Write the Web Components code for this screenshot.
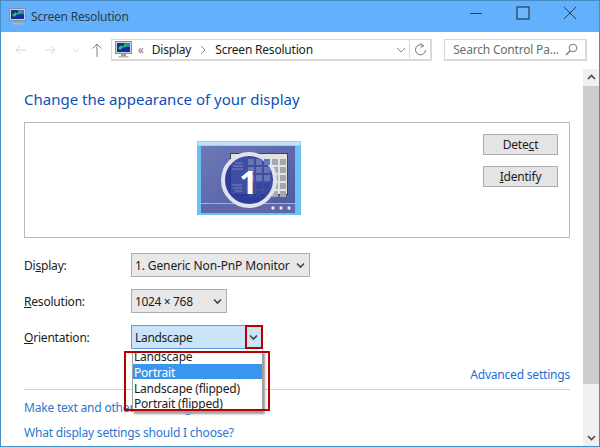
<!DOCTYPE html>
<html><head><meta charset="utf-8"><title>Screen Resolution</title>
<style>
html,body{margin:0;padding:0;height:100%;overflow:hidden;background:#fff}
body{font:12px "Noto Sans","Open Sans",sans-serif;color:#1c1c1c;letter-spacing:-.2px}
</style></head><body>
<app-window>
  <title-bar label="Screen Resolution"></title-bar>
  <nav-bar></nav-bar>
  <page-body>
    <display-panel></display-panel>
    <scroll-track slot="scroll"></scroll-track>
  </page-body>
</app-window>
<script>
const MON=`<svg width="17" height="17" viewBox="0 0 17 17"><rect x="0.5" y="0.5" width="16" height="12" fill="#cfd2d4" stroke="#8b8f92"/><rect x="2" y="2" width="13" height="9" fill="#0f2fa8"/><path d="M9 2h6v4H9z" fill="#2a7fd8"/><path d="M3 7l4-3 0 1.500 6-3-4 4.500 0-1.500-4 3.500z" fill="#2fd02f"/><rect x="6" y="13" width="5" height="2" fill="#9da0a3"/><rect x="3.500" y="15" width="10" height="1.500" fill="#b6b9bb"/></svg>`;
function def(name,html,extra){
  customElements.define(name,class extends HTMLElement{
    constructor(){super();this.attachShadow({mode:'open'}).innerHTML=html;}
    connectedCallback(){if(extra)extra(this);}
  });
}
def('app-window',`<style>:host{display:flex;flex-direction:column;box-sizing:border-box;width:600px;height:447px;border:1px solid #4a8cc4;background:#fff;overflow:hidden}</style><slot></slot>`);
def('title-bar',`<style>:host{display:flex;align-items:center;flex:none;height:31px;background:#63b0fc;padding-left:8px;font-size:12px;color:#2e3a4a}
.t{margin-left:5px;flex:1}
.b{display:flex;align-items:center;justify-content:center;width:47px;height:24px;margin-top:-8px}
svg{display:block}</style>
${MON}<span class="t" id="t"></span>
<span class="b"><svg width="14" height="14"><path d="M1 7.500h12" stroke="#2c3d50" stroke-width="1"/></svg></span>
<span class="b"><svg width="14" height="14"><rect x="1" y="1" width="12" height="12" fill="#6cb8ff" stroke="#2c3d50" stroke-width="1.200"/></svg></span>
<span class="b" style="margin-right:6px"><svg width="14" height="14"><path d="M1 1l12 12M13 1L1 13" stroke="#2c3d50" stroke-width="1"/></svg></span>`,
el=>{el.shadowRoot.getElementById('t').textContent=el.getAttribute('label')});
def('nav-bar',`<style>:host{display:flex;align-items:center;flex:none;height:22px;padding:7px 12px 8px 13px;background:#fff}
svg{display:block;flex:none}
.nav{display:flex;align-items:center;width:97px;gap:0}
.addr{display:flex;align-items:center;box-sizing:border-box;width:322px;height:22px;border:1px solid #d9d9d9;border-width:1px 2px 2px 1px;color:#1c1c1c;padding-left:3px}
.c{color:#777;margin:0 8px 0 6px;font-size:12px}
.s{margin:0 8px 0 9px}
.grow{flex:1}
.rf{display:flex;align-items:center;justify-content:center;width:20px;height:100%;border-left:1px solid #d9d9d9}
.srch{display:flex;align-items:center;box-sizing:border-box;width:143px;height:22px;margin-left:12px;border:1px solid #d9d9d9;border-width:1px 2px 2px 1px;padding:0 7px 0 8px;color:#6d6d6d}
</style>
<div class="nav">
<svg width="14" height="14" style="margin-right:15px"><path d="M12 7H2M6 3L2 7l4 4" fill="none" stroke="#d8d8d8"/></svg>
<svg width="14" height="14" style="margin-right:14px"><path d="M2 7h10M8 3l4 4-4 4" fill="none" stroke="#d8d8d8"/></svg>
<svg width="10" height="14" style="margin-right:10px"><path d="M2 6l3 3 3-3" fill="none" stroke="#dcdcdc"/></svg>
<svg width="12" height="16"><path d="M6 15V2M1.500 6.500L6 2l4.500 4.500" fill="none" stroke="#7d8287"/></svg>
</div>
<div class="addr">${MON}<span class="c">&laquo;</span><span>Display</span>
<svg class="s" width="7" height="10"><path d="M1 1l4 4-4 4" fill="none" stroke="#8a8a8a"/></svg>
<span>Screen Resolution</span><span class="grow"></span>
<svg width="10" height="8" style="margin-right:3px"><path d="M1 2l4 4 4-4" fill="none" stroke="#8a8a8a"/></svg>
<span class="rf"><svg width="13" height="13" viewBox="0 0 13 13"><path d="M9.500 2.800A5 5 0 1 0 11.500 7" fill="none" stroke="#777"/><path d="M6.500 .5l3 2.300-3 2" fill="none" stroke="#777"/></svg></span></div>
<div class="srch"><span>Search Control Pa...</span><span class="grow"></span>
<svg width="13" height="13" viewBox="0 0 13 13"><circle cx="8" cy="5" r="3.800" fill="none" stroke="#777"/><path d="M5.200 7.800L1 12" stroke="#777" stroke-width="1.300"/></svg></div>`);
def('page-body',`<style>:host{display:flex;flex:1;min-height:0}
.m{flex:1;min-width:0}</style><div class="m"><slot></slot></div><slot name="scroll"></slot>`);
def('scroll-track',`<style>:host{display:flex;flex-direction:column;flex:none;width:16px;background:#f0f0f0}
.a{display:flex;align-items:center;justify-content:center;height:17px;flex:none}
.th{height:298px;background:#cdcdcd;flex:none}.g{flex:1}</style>
<div class="a"><svg width="9" height="7"><path d="M1 5l3.500-3.500L8 5" fill="none" stroke="#505050" stroke-width="1.700"/></svg></div>
<div class="th"></div><div class="g"></div>
<div class="a"><svg width="9" height="7"><path d="M1 2l3.500 3.500L8 2" fill="none" stroke="#505050" stroke-width="1.700"/></svg></div>`);
def('cmd-button',`<style>:host{display:flex;align-items:center;justify-content:center;box-sizing:border-box;width:75px;height:21px;border:1px solid #adadad;background:#e4e4e4;color:#1c1c1c;font-size:12px}</style><slot></slot>`);
def('combo-box',`<style>:host{display:inline-flex;align-items:center;box-sizing:border-box;height:24px;border:1px solid #adadad;background:#e8e8e8;padding-left:3px;color:#1c1c1c;position:relative;letter-spacing:-.12px}
:host([open]){border-color:#569de5;background:#cce4f7}
.txt{flex:1;white-space:nowrap}
.ar{display:flex;align-items:center;justify-content:center;width:17px;flex:none}
</style><span class="txt"><slot></slot></span><span class="ar"><svg width="9" height="7"><path d="M1 1.500L4.500 5 8 1.500" fill="none" stroke="#444" stroke-width="1.600"/></svg></span><slot name="over"></slot>`);
def('form-row',`<style>:host{display:flex;align-items:center;height:24px}
.l{width:107px;flex:none;color:#1c1c1c}</style><span class="l"><slot name="label"></slot></span><slot></slot>`);
def('drop-list',`<style>:host{position:absolute;z-index:2;display:block;box-sizing:border-box;width:131px;height:61px;left:0;top:25px;background:#fff;border:1px solid #a0a0a0;border-top:none;box-shadow:2px 2px 2px #9a9a9a;color:#1c1c1c;letter-spacing:-.2px}
::slotted(div){height:15px;line-height:17px;white-space:nowrap;padding-left:1px}
::slotted(.first){height:13px;line-height:11px}
::slotted(.sel){background:#3a95ee;color:#fff;margin-bottom:1px}</style><slot></slot>`);
def('red-mark',`<style>:host{position:absolute;z-index:3;display:block;box-sizing:border-box;border:2px solid #b80000;pointer-events:none}</style>`);
def('monitor-art',`<style>:host{display:block;width:104px;height:74px;position:relative}
svg{display:block}
.n{position:absolute;left:0;width:103px;top:23px;text-align:center;color:#fff;font:700 32px/36px "Noto Sans",sans-serif;letter-spacing:0}
</style>
<svg width="104" height="74" viewBox="0 0 104 74">
<defs><linearGradient id="g" x1="0" y1="0" x2="1" y2="1"><stop offset="0" stop-color="#6e79b7"/><stop offset="1" stop-color="#4d5a9e"/></linearGradient></defs>
<rect x="0" y="0" width="104" height="74" fill="#6cc0f2"/>
<rect x="0.500" y="0.500" width="103" height="4" fill="#bfe3f8"/>
<rect x="4" y="5" width="94" height="67" fill="url(#g)"/>
<rect x="4" y="63" width="94" height="9" fill="#5c68a8"/><path d="M4 62.500h94" stroke="#aab0d4"/>
<rect x="33.500" y="12.500" width="57" height="41" fill="#e4e2dc" stroke="#3b3f5a"/>
<g fill="#a4a7b4">${[0,1,2,3,4].map(r=>[0,1,2,3,4].map(c=>`<rect x="${51+c*8}" y="${18+r*8}" width="6" height="6"/>`).join('')).join('')}</g>
<circle cx="52" cy="39" r="26" fill="#28389a" fill-opacity=".88" stroke="#dfe3f0" stroke-width="4"/>
<g fill="#6a75b8">${[0,1,2].map(r=>[0,1,2].map(c=>`<rect x="${51+c*8}" y="${18+r*8}" width="6" height="6"/>`).join('')).join('')}</g>
<g stroke="#7a85c0"><path d="M38 22h8M36 25h10M35 28h11M35 44h10M36 47h9M38 50h7"/></g>
<circle cx="76" cy="67" r="1.700" fill="#e6e8f4"/><circle cx="84" cy="67" r="1.700" fill="#e6e8f4"/><circle cx="92" cy="67" r="1.700" fill="#e6e8f4"/>
</svg><div class="n">1</div>`);
def('display-panel',`<style>:host{display:block;box-sizing:border-box;padding:0 13px 0 23px;position:relative;height:100%}
h1{margin:0;font-weight:400;font-size:15px;line-height:20px;color:#0c50b8;height:20px;margin-top:20px;letter-spacing:0}
.box{display:flex;box-sizing:border-box;height:116px;margin-top:13px;border:1px solid #b9b9b9;background:#fff}
.c{flex:1;display:flex;justify-content:center;padding-top:18px;padding-right:10px}
.bs{display:flex;flex-direction:column;gap:11px;padding:11px 11px 0 0}
.rows{display:flex;flex-direction:column;gap:12px;margin-top:15px}
.adv{display:flex;justify-content:flex-end;margin-top:17px;height:18px;line-height:18px;color:#1a6fd6}
hr{border:0;border-top:1px solid #d0d0d0;margin:5px 0 0}
.lk{display:block;color:#2a76d2;height:18px;line-height:18px;white-space:nowrap}
</style>
<h1>Change the appearance of your display</h1>
<div class="box"><div class="c"><monitor-art></monitor-art></div>
<div class="bs"><cmd-button>Dete<u>c</u>t</cmd-button><cmd-button><u>I</u>dentify</cmd-button></div></div>
<div class="rows">
<form-row><span slot="label">Di<u>s</u>play:</span><combo-box style="width:179px">1. Generic Non-PnP Monitor</combo-box></form-row>
<form-row><span slot="label"><u>R</u>esolution:</span><combo-box style="width:96px;letter-spacing:-.35px">1024 × 768</combo-box></form-row>
<form-row><span slot="label"><u>O</u>rientation:</span><combo-box open style="width:132px;letter-spacing:-.3px">Landscape
<drop-list slot="over"><div class="first">Landscape</div><div class="sel">Portrait</div><div>Landscape (flipped)</div><div>Portrait (flipped)</div></drop-list>
<red-mark slot="over" style="left:-8px;top:25px;width:146px;height:60px"></red-mark>
<red-mark slot="over" style="right:-1px;top:-1px;width:18px;height:24px"></red-mark>
</combo-box></form-row>
</div>
<div class="adv">Advanced settings</div>
<hr>
<a class="lk" style="margin-top:9px">Make text and other items larger or smaller</a>
<a class="lk" style="margin-top:7px">What display settings should I choose?</a>`);
</script>
</body></html>
